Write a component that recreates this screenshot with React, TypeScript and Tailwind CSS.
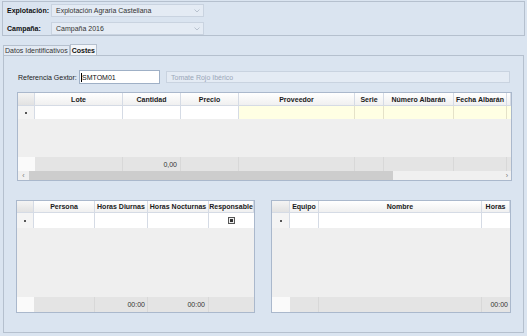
import React from 'react';

const font = { fontFamily: '"Liberation Sans", Arial, sans-serif' };

function Combo({ text }: { text: string }) {
  return (
    <div className="flex h-[13px] w-[153px] items-center justify-between border border-[#c9d3e0] bg-[#e4ebf4] pl-[4px] pr-[3px] text-[#333]">
      <span>{text}</span>
      <svg width="6" height="4" viewBox="0 0 6 4">
        <path d="M0.5 0.5 L3 3 L5.5 0.5" fill="none" stroke="#b8c2cf" strokeWidth="1" />
      </svg>
    </div>
  );
}

function HeaderCell({ label, first }: { label?: string; first?: boolean }) {
  return (
    <div
      className={
        'flex items-center justify-center border-r border-[#d5dbe5] font-bold text-[#1a1a1a] ' +
        (first ? 'bg-gradient-to-b from-[#f4f4f4] to-[#e2e2e2]' : 'bg-gradient-to-b from-white to-[#f0f0f0]')
      }
    >
      {label}
    </div>
  );
}

function RowHeader() {
  return (
    <div className="flex items-center justify-center border-r border-[#d5dbe5] bg-[#f4f4f4]">
      <span className="h-[2px] w-[2px] rounded-full bg-[#222]" />
    </div>
  );
}

function Grid1() {
  const cols = 'grid grid-cols-[17px_88px_58px_58px_116px_29px_70px_53px_1fr]';
  return (
    <div className="ml-[13px] mt-[8px] w-[495px] border border-[#aab8cc] bg-[#efefef]">
      <div className={cols + ' h-[13px] border-b border-[#d5dbe5]'}>
        <HeaderCell first />
        <HeaderCell label="Lote" />
        <HeaderCell label="Cantidad" />
        <HeaderCell label="Precio" />
        <HeaderCell label="Proveedor" />
        <HeaderCell label="Serie" />
        <HeaderCell label="Número Albarán" />
        <HeaderCell label="Fecha Albarán" />
        <HeaderCell />
      </div>
      <div className={cols + ' h-[13px]'}>
        <RowHeader />
        <div className="border-r border-[#d5dbe5] bg-white" />
        <div className="border-r border-[#d5dbe5] bg-white" />
        <div className="border-r border-[#d5dbe5] bg-white" />
        <div className="border-r border-[#e5e2c8] bg-[#ffffe3]" />
        <div className="border-r border-[#e5e2c8] bg-[#ffffe3]" />
        <div className="border-r border-[#e5e2c8] bg-[#ffffe3]" />
        <div className="border-r border-[#e5e2c8] bg-[#ffffe3]" />
        <div className="bg-[#ffffe3]" />
      </div>
      <div className="h-[38px]" />
      <div className={cols + ' h-[14px] bg-[#e4e4e4]'}>
        <div className="bg-[#fafafa]" />
        <div className="border-r border-[#d8d8d8]" />
        <div className="flex items-center justify-end border-r border-[#d8d8d8] pr-[3px] text-[#333]">0,00</div>
        <div className="border-r border-[#d8d8d8]" />
        <div className="border-r border-[#d8d8d8]" />
        <div className="border-r border-[#d8d8d8]" />
        <div className="border-r border-[#d8d8d8]" />
        <div className="border-r border-[#d8d8d8]" />
        <div />
      </div>
      <div className="flex h-[9px] items-center bg-[#f0f0f0]">
        <div className="flex w-[11px] items-center justify-center text-[7px] leading-none text-[#777]">‹</div>
        <div className="h-full w-[364px] bg-[#cdcdcd]" />
        <div className="flex-1" />
        <div className="flex w-[8px] items-center justify-center text-[7px] leading-none text-[#777]">›</div>
      </div>
    </div>
  );
}

function Grid2() {
  const cols = 'grid grid-cols-[17px_61px_53px_61px_1fr]';
  return (
    <div className="w-[239px] border border-[#aab8cc] bg-[#efefef]">
      <div className={cols + ' h-[12px] border-b border-[#d5dbe5]'}>
        <HeaderCell first />
        <HeaderCell label="Persona" />
        <HeaderCell label="Horas Diurnas" />
        <HeaderCell label="Horas Nocturnas" />
        <HeaderCell label="Responsable" />
      </div>
      <div className={cols + ' h-[15px]'}>
        <RowHeader />
        <div className="border-r border-[#d5dbe5] bg-white" />
        <div className="border-r border-[#d5dbe5] bg-white" />
        <div className="border-r border-[#d5dbe5] bg-white" />
        <div className="flex items-center justify-center bg-white">
          <div className="flex h-[7px] w-[7px] items-center justify-center border border-[#555] bg-[#eee]">
            <div className="h-[3px] w-[3px] bg-[#333]" />
          </div>
        </div>
      </div>
      <div className="h-[69px]" />
      <div className={cols + ' h-[15px] bg-[#e4e4e4]'}>
        <div className="bg-[#fafafa]" />
        <div className="border-r border-[#d8d8d8]" />
        <div className="flex items-center justify-end border-r border-[#d8d8d8] pr-[2px] text-[#333]">00:00</div>
        <div className="flex items-center justify-end border-r border-[#d8d8d8] pr-[3px] text-[#333]">00:00</div>
        <div />
      </div>
    </div>
  );
}

function Grid3() {
  const cols = 'grid grid-cols-[18px_29px_163px_1fr]';
  return (
    <div className="w-[240px] border border-[#aab8cc] bg-[#efefef]">
      <div className={cols + ' h-[12px] border-b border-[#d5dbe5]'}>
        <HeaderCell first />
        <HeaderCell label="Equipo" />
        <HeaderCell label="Nombre" />
        <HeaderCell label="Horas" />
      </div>
      <div className={cols + ' h-[15px]'}>
        <RowHeader />
        <div className="border-r border-[#d5dbe5] bg-white" />
        <div className="border-r border-[#d5dbe5] bg-white" />
        <div className="bg-white" />
      </div>
      <div className="h-[69px]" />
      <div className={cols + ' h-[15px] bg-[#e4e4e4]'}>
        <div className="bg-[#fafafa]" />
        <div className="border-r border-[#d8d8d8]" />
        <div className="border-r border-[#d8d8d8]" />
        <div className="flex items-center justify-end pr-[2px] text-[#333]">00:00</div>
      </div>
    </div>
  );
}

export default function App() {
  return (
    <div className="h-[336px] w-[527px] overflow-hidden bg-[#dae4f0] text-[7px] leading-none" style={font}>
      <div className="ml-[2px] mt-[1px] flex h-[35px] w-[523px] flex-col gap-[5px] border border-[#b5c0ce] pl-[4px] pt-[2px]">
        <div className="flex items-center">
          <span className="w-[44px] font-bold text-[#111]">Explotación:</span>
          <Combo text="Explotación Agraria Castellana" />
        </div>
        <div className="flex items-center">
          <span className="w-[44px] font-bold text-[#111]">Campaña:</span>
          <Combo text="Campaña 2016" />
        </div>
      </div>

      <div className="ml-[3px] mt-[8px] flex h-[11px] items-end">
        <div className="flex h-[10px] items-center border border-b-0 border-[#b5c0ce] bg-[#e3eaf3] px-[1px] text-[#333]">
          Datos Identificativos
        </div>
        <div className="flex h-[11px] items-center border border-b-0 border-[#b5c0ce] bg-[#f3f6fa] px-[1px] font-bold text-[#111]">
          Costes
        </div>
      </div>

      <div className="ml-[3px] h-[278px] w-[521px] border border-[#b5c0ce] bg-[#dae4f0]">
        <div className="ml-[14px] mt-[14px] flex items-center">
          <span className="w-[61px] text-[#222]">Referencia Gextor:</span>
          <div className="flex h-[14px] w-[81px] items-center border border-[#9fb0c6] bg-white pl-[1px] text-[#111]">
            <span className="h-[9px] w-px bg-black" />
            SMTOM01
          </div>
          <div className="ml-[6px] flex h-[12px] w-[344px] items-center border border-[#c9d3e0] bg-[#e4ebf4] pl-[4px] text-[#9aa7b8]">
            Tomate Rojo Ibérico
          </div>
        </div>

        <Grid1 />

        <div className="ml-[12px] mt-[19px] flex gap-[16px]">
          <Grid2 />
          <Grid3 />
        </div>
      </div>
    </div>
  );
}
